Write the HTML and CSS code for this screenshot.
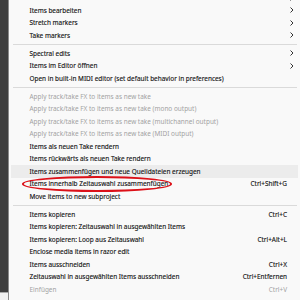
FILE: index.html
```html
<!DOCTYPE html>
<html>
<head>
<meta charset="utf-8">
<link rel="stylesheet" href="styles.css">
</head>
<body>
<div class="side"><div class="win"></div></div>
<div class="menu">
  <div class="row"><span class="label"></span><span class="key"></span><span class="arrow"><svg width="4" height="6" viewBox="0 0 4 6"><polyline points="0.5,0.5 3,3 0.5,5.5" fill="none" stroke="#333" stroke-width="1"/></svg></span></div>
  <div class="row"><span class="label">Items bearbeiten</span><span class="key"></span><span class="arrow"><svg width="4" height="6" viewBox="0 0 4 6"><polyline points="0.5,0.5 3,3 0.5,5.5" fill="none" stroke="#333" stroke-width="1"/></svg></span></div>
  <div class="row"><span class="label">Stretch markers</span><span class="key"></span><span class="arrow"><svg width="4" height="6" viewBox="0 0 4 6"><polyline points="0.5,0.5 3,3 0.5,5.5" fill="none" stroke="#333" stroke-width="1"/></svg></span></div>
  <div class="row"><span class="label">Take markers</span><span class="key"></span><span class="arrow"><svg width="4" height="6" viewBox="0 0 4 6"><polyline points="0.5,0.5 3,3 0.5,5.5" fill="none" stroke="#333" stroke-width="1"/></svg></span></div>
  <div class="sep"></div>
  <div class="row"><span class="label">Spectral edits</span><span class="key"></span><span class="arrow"><svg width="4" height="6" viewBox="0 0 4 6"><polyline points="0.5,0.5 3,3 0.5,5.5" fill="none" stroke="#333" stroke-width="1"/></svg></span></div>
  <div class="row"><span class="label">Items im Editor öffnen</span><span class="key"></span><span class="arrow"><svg width="4" height="6" viewBox="0 0 4 6"><polyline points="0.5,0.5 3,3 0.5,5.5" fill="none" stroke="#333" stroke-width="1"/></svg></span></div>
  <div class="row"><span class="label">Open in built-in MIDI editor (set default behavior in preferences)</span><span class="key"></span><span class="arrow"></span></div>
  <div class="sep"></div>
  <div class="row dis"><span class="label">Apply track/take FX to items as new take</span><span class="key"></span><span class="arrow"></span></div>
  <div class="row dis"><span class="label">Apply track/take FX to items as new take (mono output)</span><span class="key"></span><span class="arrow"></span></div>
  <div class="row dis"><span class="label">Apply track/take FX to items as new take (multichannel output)</span><span class="key"></span><span class="arrow"></span></div>
  <div class="row dis"><span class="label">Apply track/take FX to items as new take (MIDI output)</span><span class="key"></span><span class="arrow"></span></div>
  <div class="row"><span class="label">Items als neuen Take rendern</span><span class="key"></span><span class="arrow"></span></div>
  <div class="row"><span class="label">Items rückwärts als neuen Take rendern</span><span class="key"></span><span class="arrow"></span></div>
  <div class="row hover"><span class="label">Items zusammenfügen und neue Quelldateien erzeugen</span><span class="key"></span><span class="arrow"></span></div>
  <div class="row marked"><span class="label">Items innerhalb Zeitauswahl zusammenfügen</span><span class="key">Ctrl+Shift+G</span><span class="arrow"></span><div class="ring"></div></div>
  <div class="row"><span class="label">Move items to new subproject</span><span class="key"></span><span class="arrow"></span></div>
  <div class="sep"></div>
  <div class="row"><span class="label">Items kopieren</span><span class="key">Ctrl+C</span><span class="arrow"></span></div>
  <div class="row"><span class="label">Items kopieren: Zeitauswahl in ausgewählten Items</span><span class="key"></span><span class="arrow"></span></div>
  <div class="row"><span class="label">Items kopieren: Loop aus Zeitauswahl</span><span class="key">Ctrl+Alt+L</span><span class="arrow"></span></div>
  <div class="row"><span class="label">Enclose media items in razor edit</span><span class="key"></span><span class="arrow"></span></div>
  <div class="row"><span class="label">Items ausschneiden</span><span class="key">Ctrl+X</span><span class="arrow"></span></div>
  <div class="row"><span class="label">Zeitauswahl in ausgewählten Items ausschneiden</span><span class="key">Ctrl+Entfernen</span><span class="arrow"></span></div>
  <div class="row dis"><span class="label">Einfügen</span><span class="key">Ctrl+V</span><span class="arrow"></span></div>
</div>
</body>
</html>
```

FILE: styles.css
```css
html, body {
  margin: 0;
  padding: 0;
}
body {
  width: 300px;
  height: 300px;
  overflow: hidden;
  display: flex;
  background: #f9f9f9;
  font-family: "Noto Sans", "Open Sans", sans-serif;
  font-size: 6.45px;
  color: #111;
}
.side {
  width: 8px;
  flex: none;
  background: #3e3e3e;
  border-right: 1px solid #8a8a8a;
  display: flex;
  flex-direction: column;
  justify-content: flex-end;
}
.side .win {
  height: 7px;
  background: #f0f0f0;
  border-top: 1px solid #a8a8a8;
}
.menu {
  flex: 1;
  padding: 0 2px;
  margin-top: -8.45px;
}
.row {
  position: relative;
  height: 12.5px;
  display: grid;
  grid-template-columns: 1fr auto 11px;
  align-items: center;
  padding-left: 18.5px;
  white-space: nowrap;
  -webkit-text-stroke: 0.12px currentColor;
}
.row.hover {
  background: #ececec;
}
.row.dis {
  color: #a2a2a2;
  -webkit-text-stroke: 0;
}
.key {
  text-align: right;
}
.arrow {
  display: flex;
  align-items: center;
  padding-left: 3px;
}
.arrow svg {
  display: block;
}
.sep {
  height: 5.5px;
  display: flex;
  align-items: center;
  margin: 0 1px 0 2px;
}
.sep::before {
  content: "";
  flex: 1;
  height: 1px;
  background: #dadada;
}
.ring {
  position: absolute;
  left: 11px;
  top: -1.5px;
  width: 150px;
  height: 15.5px;
  box-sizing: border-box;
  border: 2px solid #dc1018;
  border-radius: 50%;
}
```
